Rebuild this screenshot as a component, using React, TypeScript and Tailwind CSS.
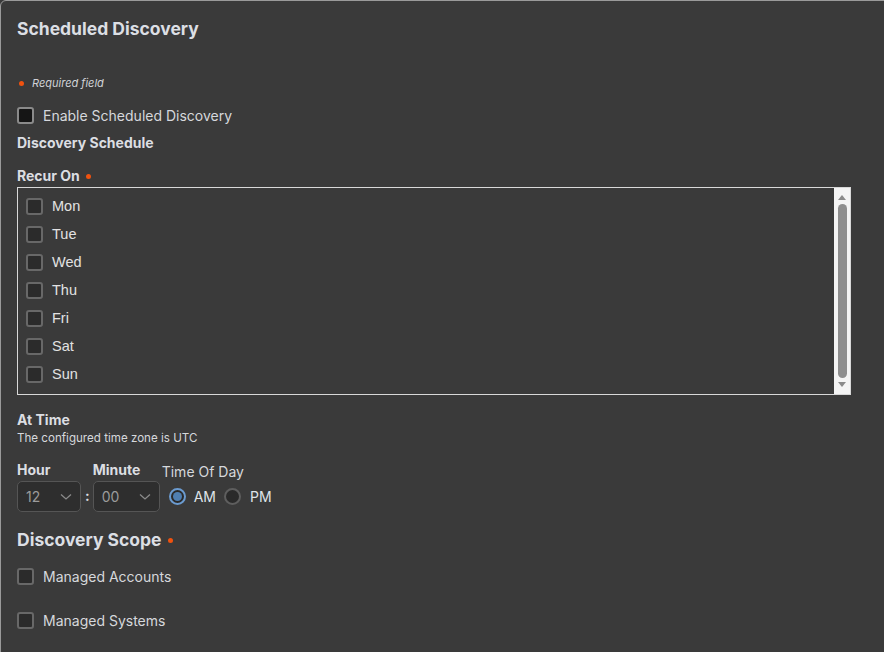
import React from "react";

const inter = { fontFamily: "Inter, 'Noto Sans', sans-serif" };

function Dot() {
  return <span className="inline-block w-[5px] h-[5px] rounded-full bg-[#f0520f]" />;
}

function Box({ variant }: { variant: "enable" | "day" | "scope" }) {
  const cls =
    variant === "enable"
      ? "bg-[#151515] border-[#8a8a8a]"
      : "bg-[#2b2b2b] border-[#686868]";
  return <span className={`inline-block w-[17px] h-[17px] rounded-[3px] border-2 ${cls} shrink-0`} />;
}

function Select({ value, width }: { value: string; width: string }) {
  return (
    <div
      className={`${width} h-[31px] mt-[2px] rounded-[5px] border border-[#555555] bg-[#2e2e2e] flex items-center justify-between pl-[8px] pr-[8px]`}
    >
      <span className="text-[14px] text-[#9b9b9b]">{value}</span>
      <svg width="12" height="8" viewBox="0 0 12 8" fill="none">
        <path d="M1 1.5 L6 6 L11 1.5" stroke="#8a8a8a" strokeWidth="1.3" />
      </svg>
    </div>
  );
}

const days = ["Mon", "Tue", "Wed", "Thu", "Fri", "Sat", "Sun"];

export default function App() {
  return (
    <div className="w-[884px] h-[652px] overflow-hidden bg-[#3a3a3a]" style={inter}>
      <div className="w-[900px] h-[700px] border border-[#9a9a9a] rounded-[6px] bg-[#3a3a3a] pt-[16px] pl-[16px] text-[#dcdee2]">
        <div className="text-[17.5px] leading-[24px] font-bold text-[#dcdfe4]">Scheduled Discovery</div>

        <div className="mt-[34px] h-[16px] flex items-center gap-[8px] pl-[2px]">
          <Dot />
          <span className="text-[11px] italic text-[#d0d2d6]">Required field</span>
        </div>

        <div className="mt-[14px] h-[20px] flex items-center gap-[9px]">
          <Box variant="enable" />
          <span className="text-[14px] text-[#d6d8dc]">Enable Scheduled Discovery</span>
        </div>

        <div className="mt-[9px] text-[14px] leading-[18px] font-bold">Discovery Schedule</div>

        <div className="mt-[15px] text-[14px] leading-[18px] font-bold flex items-center gap-[6px]">
          <span>Recur On</span>
          <Dot />
        </div>

        <div className="mt-[2px] w-[834px] h-[208px] border border-[#d8d8d8] flex">
          <div className="flex-1 pt-[4px] pl-[8px]" style={{ fontFamily: "'Liberation Sans', Arial, sans-serif" }}>
            {days.map((d) => (
              <div key={d} className="h-[28px] flex items-center gap-[9px]">
                <Box variant="day" />
                <span className="text-[14.5px] text-[#e2e2e2] pt-[2px]">{d}</span>
              </div>
            ))}
          </div>
          <div className="w-[16px] h-full bg-[#f4f4f4] flex flex-col items-center py-[3px]">
            <svg width="8" height="6" viewBox="0 0 8 6" className="mt-[3px]">
              <path d="M0 6 L4 1 L8 6 Z" fill="#8a8a8a" />
            </svg>
            <div className="w-[9px] flex-1 my-[4px] rounded-full bg-[#8e8e8e]" />
            <svg width="8" height="6" viewBox="0 0 8 6" className="mb-[3px]">
              <path d="M0 0 L4 5 L8 0 Z" fill="#8a8a8a" />
            </svg>
          </div>
        </div>

        <div className="mt-[16px] text-[14px] leading-[18px] font-bold">At Time</div>
        <div className="mt-[1px] text-[11.6px] leading-[16px] text-[#d6d8dc]">The configured time zone is UTC</div>

        <div className="mt-[15px] flex items-start">
          <div className="flex flex-col">
            <span className="text-[14px] leading-[18px] font-bold">Hour</span>
            <Select value="12" width="w-[64px]" />
          </div>
          <span className="mt-[28px] ml-[4px] mr-[3px] text-[14px] font-bold leading-[14px]">:</span>
          <div className="flex flex-col">
            <span className="text-[14px] leading-[18px] font-bold">Minute</span>
            <Select value="00" width="w-[67px]" />
          </div>
          <div className="flex flex-col ml-[2px]">
            <span className="text-[14px] leading-[18px] mt-[2px] text-[#d6d8dc]">Time Of Day</span>
            <div className="mt-[5px] h-[20px] flex items-center pl-[7px]">
              <span className="w-[17px] h-[17px] rounded-full border-2 border-[#6b9bd0] bg-[#2a2a2a] flex items-center justify-center">
                <span className="w-[9px] h-[9px] rounded-full bg-[#4f7fb2]" />
              </span>
              <span className="ml-[8px] text-[14px] text-[#dfe3e8]">AM</span>
              <span className="ml-[8px] w-[17px] h-[17px] rounded-full border-2 border-[#5e5e5e] bg-[#2a2a2a]" />
              <span className="ml-[9px] text-[14px] text-[#dfe3e8]">PM</span>
            </div>
          </div>
        </div>

        <div className="mt-[16px] text-[17.5px] leading-[24px] font-bold flex items-center gap-[6px] text-[#dcdfe4]">
          <span>Discovery Scope</span>
          <Dot />
        </div>

        <div className="mt-[14px] h-[20px] flex items-center gap-[9px]">
          <Box variant="scope" />
          <span className="text-[14px] text-[#d6d8dc]">Managed Accounts</span>
        </div>
        <div className="mt-[24px] h-[20px] flex items-center gap-[9px]">
          <Box variant="scope" />
          <span className="text-[14px] text-[#d6d8dc]">Managed Systems</span>
        </div>
      </div>
    </div>
  );
}
